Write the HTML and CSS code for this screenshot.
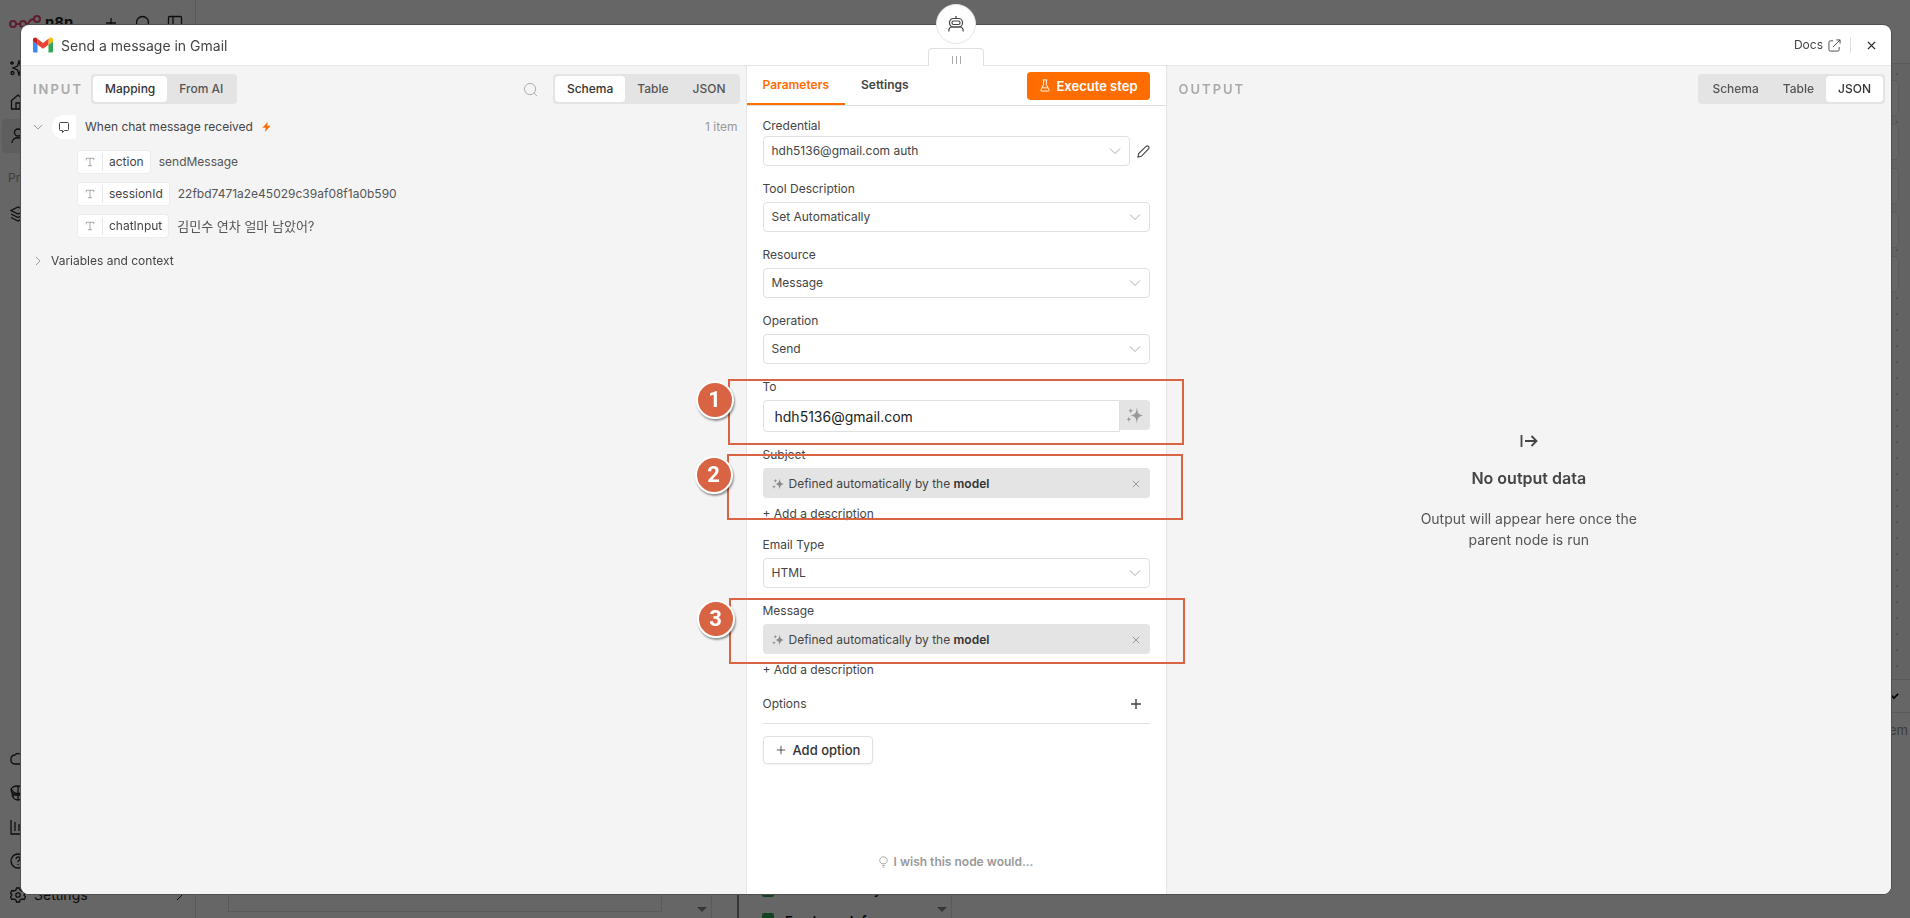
FILE: index.html
```html
<!DOCTYPE html>
<html lang="en">
<head>
  <meta charset="UTF-8"/>
  <meta name="viewport" content="width=device-width, initial-scale=1.0"/>
  <title>Send a message in Gmail - n8n</title>
  <link rel="stylesheet" href="styles.css">
</head>
<body>
  <!-- shared icons -->
  <svg class="sprite" aria-hidden="true">
    <symbol id="chevron-down" viewBox="0 0 12 12"><path d="M1 3.5l5 5 5-5"/></symbol>
    <symbol id="plus" viewBox="0 0 12 12"><path d="M6 1v10M1 6h10"/></symbol>
    <symbol id="close" viewBox="0 0 10 10"><path d="M1 1l8 8M9 1L1 9"/></symbol>
    <symbol id="search" viewBox="0 0 16 16"><circle cx="7.5" cy="7.5" r="6"/><path d="M12 12l3 3"/></symbol>
    <symbol id="text-type" viewBox="0 0 12 12"><path d="M1.500 4V1.500h9V4M6 1.500v9M3.500 10.500h5"/></symbol>
    <symbol id="sparkles" viewBox="0 0 18 18"><path d="M11.500 0c.5 6 1.500 8 6.500 9-5 1-6 3-6.500 9-.5-6-1.500-8-6.500-9 5-1 6-3 6.500-9zM5 1c.3 2 .9 2.700 3 3-2.100.3-2.700 1-3 3-.3-2-.9-2.700-3-3 2.100-.3 2.700-1 3-3zM3 10c.3 2.200.9 2.700 3 3-2.100.3-2.700 1-3 3.500-.3-2.500-.9-3.200-3-3.500 2.100-.3 2.700-.8 3-3z"/></symbol>
  </svg>

  <div class="app">
    <aside class="sidebar">
      <div class="brand">
        <svg class="logo" viewBox="0 0 32 16"><circle cx="4" cy="9" r="3"/><circle cx="14" cy="9" r="3"/><circle cx="28" cy="4" r="3"/><circle cx="27" cy="14" r="3"/><path d="M7 9h4M17 9h1c3 0 1-5 7-5M18 9c3 0 2 5 6 5"/></svg>
        <strong>n8n</strong>
        <svg class="icon first"><use href="#plus"/></svg>
        <svg class="icon"><use href="#search"/></svg>
        <svg class="icon" viewBox="0 0 16 16"><rect x="1.500" y="1.500" width="13" height="13" rx="1"/><path d="M6 1.500v13"/></svg>
      </div>
      <nav class="menu">
        <a href="#"><svg class="icon" viewBox="0 0 16 16"><path d="M9 1l1.500 5L15 8l-4.500 2L9 15l-1.500-5L3 8l4.500-2zM2 1v4M0 3h4"/><circle cx="2.500" cy="13" r="1.500"/></svg></a>
        <a href="#"><svg class="icon" viewBox="0 0 16 16"><path d="M1.500 6.500L8 1l6.500 5.500V15h-13zM6 15V9h4v6"/></svg></a>
        <a href="#" class="current"><svg class="icon" viewBox="0 0 16 16"><circle cx="8" cy="4.500" r="3.500"/><path d="M2 15c0-7 12-7 12 0"/></svg></a>
      </nav>
      <p class="menu-label">Projects</p>
      <nav class="menu">
        <a href="#"><svg class="icon" viewBox="0 0 16 16"><path d="M8 1l7 3.500L8 8 1 4.500zM1 8l7 3.500L15 8M1 11.500L8 15l7-3.500"/></svg></a>
      </nav>
      <nav class="menu bottom">
        <a href="#"><svg class="icon" viewBox="0 0 16 16"><path d="M5 13C-1 13 0 4 5 4c2-3 7-1 7 2 5 0 4 7 0 7z"/></svg></a>
        <a href="#"><svg class="icon" viewBox="0 0 16 16"><ellipse cx="7" cy="5" rx="6" ry="4"/><path d="M2 7c0 5 2 8 6 8s6-3 6-8M2 10h12M8 1v14M1 4c4 6 10 6 14 0"/></svg></a>
        <a href="#"><svg class="icon" viewBox="0 0 16 16"><path d="M1 1v14h14M5 3v9M9 5v7M13 8v4"/></svg></a>
        <a href="#"><svg class="icon" viewBox="0 0 16 16"><circle cx="8" cy="8" r="7"/><path d="M6 6c0-3 4.500-2.500 4 0-.3 1-2 1.300-2 3M8 11v1"/></svg></a>
        <a href="#"><svg class="icon" viewBox="0 0 16 16"><path d="M6.500 1h3l.6 2 1.900 1 2.100-.5 1.400 2.500L14 8l1.500 2-1.400 2.500L12 12l-1.900 1-.6 2h-3l-.6-2L4 12l-2.100.5L.5 10 2 8 .5 6l1.400-2.500L4 4l1.900-1z"/><circle cx="8" cy="8" r="2.200"/></svg>Settings
          <svg class="arrow" viewBox="0 0 12 12"><path d="M4 1l5 5-5 5"/></svg></a>
      </nav>
    </aside>

    <div class="workspace">
      <div class="topbar"></div>
      <div class="canvas">
        <div class="tool"></div>
        <div class="tool"></div>
        <div class="tool"></div>
        <div class="tool"></div>
        <div class="tool"></div>
      </div>
      <div class="logs">
        <div class="logs-head"><svg><use href="#chevron-down"/></svg></div>
        <div class="logs-body">
          <div class="chat-pane"><div class="chat-box"></div><span class="caret"></span></div>
          <div class="run-pane">
            <ul>
              <li><i class="sheet"></i>Vacation Policy</li>
              <li><i class="sheet"></i>Employee Info</li>
            </ul>
            <span class="caret"></span>
          </div>
          <div class="data-pane">1 item</div>
        </div>
      </div>
    </div>
  </div>

  <div class="overlay"></div>

  <div class="modal" role="dialog" aria-labelledby="title">
    <div class="parent-node">
      <svg viewBox="0 0 16 16"><path d="M8 0v3M.8 15.500c0-3.500 1.700-4.500 3.200-4.500h8c1.500 0 3.200 1 3.200 4.500"/><rect x="1.500" y="2.500" width="13" height="8.500" rx="4"/><rect x="4" y="5" width="8" height="3.500" rx="1.500"/></svg>
    </div>
    <header class="modal-head">
      <svg class="gmail" viewBox="52 42 88 66">
        <path fill="#4285f4" d="M58 108h14V74L52 59v43c0 3.320 2.690 6 6 6"/>
        <path fill="#34a853" d="M120 108h14c3.320 0 6-2.690 6-6V59l-20 15"/>
        <path fill="#fbbc04" d="M120 48v26l20-15v-8c0-7.420-8.470-11.650-14.400-7.200"/>
        <path fill="#ea4335" d="M72 74V48l24 18 24-18v26L96 92"/>
        <path fill="#c5221f" d="M52 51v8l20 15V48l-5.600-4.200c-5.940-4.450-14.400-.22-14.400 7.200"/>
      </svg>
      <h1 id="title">Send a message in Gmail</h1>
      <a class="docs" href="#">Docs
        <svg viewBox="0 0 14 14"><path d="M5.500 2H2.500A1.500 1.500 0 0 0 1 3.500v8A1.500 1.500 0 0 0 2.500 13h8a1.500 1.500 0 0 0 1.500-1.500v-3M5.500 8.500L13 1M9 1h4v4"/></svg>
      </a>
      <button class="close" aria-label="Close"><svg><use href="#close"/></svg></button>
    </header>

    <div class="panels">
      <section class="panel">
        <div class="panel-head">
          <h2>Input</h2>
          <div class="segmented">
            <button class="active">Mapping</button>
            <button>From AI</button>
          </div>
          <button class="search" aria-label="Search"><svg><use href="#search"/></svg></button>
          <div class="segmented">
            <button class="active">Schema</button>
            <button>Table</button>
            <button>JSON</button>
          </div>
        </div>
        <div class="schema">
          <div class="schema-node">
            <svg class="toggle"><use href="#chevron-down"/></svg>
            <span class="node-icon"><svg viewBox="0 0 12 12"><path d="M2.500 1.500h7a1 1 0 0 1 1 1v6a1 1 0 0 1-1 1H6.500L4.500 11.500V9.500h-2a1 1 0 0 1-1-1v-6a1 1 0 0 1 1-1z"/></svg></span>
            <span>When chat message received</span>
            <svg class="bolt" viewBox="0 0 10 12"><path d="M6.500 0L0 7h4L3 12l7-7.500H5.800z"/></svg>
            <span class="count">1 item</span>
          </div>
          <ul class="fields">
            <li><span class="pill"><svg><use href="#text-type"/></svg><b>action</b></span><span>sendMessage</span></li>
            <li><span class="pill"><svg><use href="#text-type"/></svg><b>sessionId</b></span><span>22fbd7471a2e45029c39af08f1a0b590</span></li>
            <li><span class="pill"><svg><use href="#text-type"/></svg><b>chatInput</b></span><span lang="ko">김민수 연차 얼마 남았어?</span></li>
          </ul>
          <div class="schema-vars">
            <svg class="toggle closed"><use href="#chevron-down"/></svg>
            <span>Variables and context</span>
          </div>
        </div>
      </section>

      <section class="params">
        <div class="drag"><span></span><span></span><span></span></div>
        <div class="tabs">
          <button class="tab active">Parameters</button>
          <button class="tab">Settings</button>
          <button class="execute">
            <svg viewBox="0 0 12 14"><path d="M3.500 1h5M4.500 1v5L1.500 12c-.2.600 0 1 .7 1h7.600c.7 0 .9-.4.700-1L7.500 6V1M3 9.500h6"/></svg>
            Execute step
          </button>
        </div>
        <form class="form">
          <div class="field credential">
            <label for="credential">Credential</label>
            <div class="row">
              <div class="select">
                <select id="credential"><option>hdh5136@gmail.com auth</option></select>
                <svg><use href="#chevron-down"/></svg>
              </div>
              <button type="button" class="edit" aria-label="Edit credential">
                <svg viewBox="0 0 14 14"><path d="M1 13l.8-3.800L10 1.300c1.700-1 3.600.8 2.600 2.600L4.700 12.200z"/></svg>
              </button>
            </div>
          </div>
          <div class="field">
            <label for="description">Tool Description</label>
            <div class="select">
              <select id="description"><option>Set Automatically</option></select>
              <svg><use href="#chevron-down"/></svg>
            </div>
          </div>
          <div class="field">
            <label for="resource">Resource</label>
            <div class="select">
              <select id="resource"><option>Message</option></select>
              <svg><use href="#chevron-down"/></svg>
            </div>
          </div>
          <div class="field">
            <label for="operation">Operation</label>
            <div class="select">
              <select id="operation"><option>Send</option></select>
              <svg><use href="#chevron-down"/></svg>
            </div>
          </div>
          <div class="field">
            <label for="to">To</label>
            <div class="to-row">
              <input type="text" id="to" value="hdh5136@gmail.com">
              <button type="button" class="ai" aria-label="Let the model define this"><svg><use href="#sparkles"/></svg></button>
            </div>
          </div>
          <div class="field">
            <span class="label">Subject</span>
            <div class="auto">
              <svg class="spark"><use href="#sparkles"/></svg>
              <span>Defined automatically by the <b>model</b></span>
              <button type="button" aria-label="Clear subject"><svg><use href="#close"/></svg></button>
            </div>
            <a class="add-desc" href="#">+ Add a description</a>
          </div>
          <div class="field">
            <label for="emailType">Email Type</label>
            <div class="select">
              <select id="emailType"><option>HTML</option></select>
              <svg><use href="#chevron-down"/></svg>
            </div>
          </div>
          <div class="field">
            <span class="label">Message</span>
            <div class="auto">
              <svg class="spark"><use href="#sparkles"/></svg>
              <span>Defined automatically by the <b>model</b></span>
              <button type="button" aria-label="Clear message"><svg><use href="#close"/></svg></button>
            </div>
            <a class="add-desc" href="#">+ Add a description</a>
          </div>
          <div class="options">
            <span>Options</span>
            <button type="button" aria-label="Add"><svg><use href="#plus"/></svg></button>
          </div>
          <button type="button" class="add-option"><svg><use href="#plus"/></svg>Add option</button>
        </form>
        <a class="wish" href="#">
          <svg viewBox="0 0 10 14"><path d="M3 9C-1.500 6 1 1 5 1s6.500 5 2 8M3 9h4M3.500 11h3M4 13h2"/></svg>
          I wish this node would...
        </a>

        <div class="callout one"><span>1</span></div>
        <div class="callout two"><span>2</span></div>
        <div class="callout three"><span>3</span></div>
      </section>

      <section class="panel">
        <div class="panel-head">
          <h2>Output</h2>
          <div class="segmented end">
            <button>Schema</button>
            <button>Table</button>
            <button class="active">JSON</button>
          </div>
        </div>
        <div class="empty">
          <svg viewBox="0 0 18 14"><path d="M1.500 1v12M5 7h11.500M11.500 2l5 5-5 5"/></svg>
          <h3>No output data</h3>
          <p>Output will appear here once the parent node is run</p>
        </div>
      </section>
    </div>
  </div>
</body>
</html>
```
FILE: styles.css
```css
* {
  box-sizing: border-box;
}

body {
  margin: 0;
  overflow: hidden;
  font-family: Inter, "Noto Sans CJK KR", sans-serif;
  font-size: 12px;
  line-height: 18px;
  color: #444;
}

h1, h2, h3, p, ul {
  margin: 0;
  padding: 0;
}

ul {
  list-style: none;
}

a {
  color: inherit;
  text-decoration: none;
}

button, input, select {
  font: inherit;
  color: inherit;
  margin: 0;
}

button {
  display: flex;
  align-items: center;
  justify-content: center;
  padding: 0;
  border: none;
  background: none;
  cursor: pointer;
}

svg {
  display: block;
  flex: none;
  width: 12px;
  height: 12px;
  fill: none;
  stroke: currentColor;
}

.sprite {
  position: absolute;
  width: 0;
  height: 0;
}

/* editor behind the dialog */
.app {
  display: flex;
  height: 100vh;
  background: #fff;
}

.sidebar {
  display: flex;
  flex-direction: column;
  width: 196px;
  padding-bottom: 6px;
  border-right: 1px solid #e0e0e0;
  font-size: 14px;
}

.icon {
  width: 16px;
  height: 16px;
  stroke-width: 1.3;
}

.brand {
  display: flex;
  align-items: center;
  gap: 16px;
  height: 51px;
  padding: 0 12px 6px 9px;
  color: #222;
}

.brand strong {
  margin-left: -12px;
  font-size: 15px;
  line-height: 20px;
}

.brand .first {
  width: 12px;
  height: 12px;
  margin: 0 2px 0 auto;
}

.logo {
  width: 32px;
  height: 16px;
  stroke: #ea4b71;
  stroke-width: 2;
}

.menu a {
  display: flex;
  align-items: center;
  gap: 8px;
  height: 34px;
  margin: 0 2px;
  padding: 0 8px;
  border-radius: 4px;
  color: #222;
}

.menu .current {
  background: #ebebeb;
}

.menu .arrow {
  margin-left: auto;
}

.menu-label {
  padding: 16px 8px 10px;
  font-size: 12px;
  color: #999;
}

.bottom {
  margin-top: auto;
}

.workspace {
  flex: 1;
  display: flex;
  flex-direction: column;
}

.topbar {
  height: 64px;
  border-bottom: 1px solid #e0e0e0;
}

.canvas {
  flex: 1;
  display: flex;
  flex-direction: column;
  align-items: flex-end;
  gap: 8px;
  padding: 16px 11px;
  background: #f8f8f8 radial-gradient(#ccc 1px, transparent 1px) 13px 2px / 16px 16px;
}

.tool {
  width: 36px;
  height: 36px;
  border: 1px solid #e5e5e5;
  border-radius: 4px;
  background: #fff;
}

.logs {
  display: flex;
  flex-direction: column;
  height: 239px;
  border-top: 1px solid #e0e0e0;
}

.logs-head {
  display: flex;
  align-items: center;
  justify-content: flex-end;
  height: 33px;
  padding-right: 11px;
  border-bottom: 1px solid #e0e0e0;
  color: #000;
}

.logs-head svg {
  width: 10px;
  stroke-width: 2;
}

.logs-body {
  flex: 1;
  display: flex;
}

.chat-pane,
.run-pane {
  display: flex;
  align-items: flex-end;
  padding: 0 4px 6px 0;
  border-right: 1px solid #e0e0e0;
}

.chat-pane {
  width: 516px;
  padding-left: 32px;
}

.chat-box {
  flex: 1;
  height: 100px;
  margin-right: 35px;
  border: 1px solid #e0e0e0;
}

.caret {
  border: 5px solid transparent;
  border-top-color: #888;
  border-bottom: none;
}

.run-pane {
  width: 215px;
  margin-left: 25px;
  border-left: 2px solid #888;
}

.run-pane ul {
  flex: 1;
  height: 39px;
  padding-left: 23px;
  font-size: 13px;
  font-weight: 600;
  color: #111;
}

.run-pane li {
  display: flex;
  align-items: center;
  gap: 11px;
  height: 32px;
}

.sheet {
  width: 12px;
  height: 16px;
  border-radius: 2px;
  background: #23a94d;
}

.data-pane {
  flex: 1;
  padding: 8px 2px;
  text-align: right;
  font-size: 13px;
  color: #999;
}

.overlay {
  position: fixed;
  inset: 0;
  background: rgba(0, 0, 0, 0.6);
}

/* dialog */
.modal {
  position: fixed;
  inset: 25px 19px 24px 21px;
  display: flex;
  flex-direction: column;
  border-radius: 8px;
  background: #fff;
  box-shadow: 0 0 0 1px #505050;
}

.parent-node {
  position: absolute;
  top: -21px;
  left: 50%;
  display: flex;
  align-items: center;
  justify-content: center;
  width: 40px;
  height: 40px;
  margin-left: -20px;
  border: 1px solid #e5e5e5;
  border-radius: 50%;
  background: #fff;
}

.parent-node svg {
  width: 16px;
  height: 16px;
  stroke-width: 1.2;
}

.modal-head {
  display: flex;
  align-items: center;
  height: 41px;
  padding: 0 12px;
  border-bottom: 1px solid #e5e5e5;
}

.gmail {
  width: 20px;
  height: 16px;
  stroke: none;
}

.modal-head h1 {
  margin-left: 8px;
  padding-top: 2px;
  font-size: 14px;
  font-weight: 400;
}

.docs {
  display: flex;
  align-items: center;
  gap: 5px;
  height: 16px;
  margin-left: auto;
  padding-right: 9px;
  border-right: 1px solid #e0e0e0;
}

.docs svg {
  width: 13px;
  height: 13px;
}

.close {
  width: 16px;
  height: 16px;
  margin-left: 12px;
  color: #222;
}

.close svg {
  width: 9px;
  height: 9px;
  stroke-width: 1.4;
}

.panels {
  flex: 1;
  display: grid;
  grid-template-columns: 1fr 421px 1fr;
}

.panel {
  display: flex;
  flex-direction: column;
  background: #f4f4f4;
}

.panel:first-child {
  border-bottom-left-radius: 8px;
}

.panel:last-child {
  border-bottom-right-radius: 8px;
}

.panel-head {
  display: flex;
  align-items: center;
  padding: 8px 6px 8px 12px;
}

.panel-head h2 {
  margin-right: 8px;
  font-size: 13px;
  font-weight: 600;
  letter-spacing: 2px;
  text-transform: uppercase;
  color: #aaa;
}

.segmented {
  display: flex;
  padding: 2px;
  border-radius: 4px;
  background: #e4e4e4;
}

.segmented.end {
  margin-left: auto;
}

.segmented button {
  height: 26px;
  padding: 0 12px;
  border-radius: 4px;
  font-weight: 500;
  color: #555;
}

.segmented .active {
  background: #fff;
  color: #333;
}

.search {
  width: 16px;
  margin: 0 14px 0 auto;
  color: #aaa;
}

.search svg {
  width: 15px;
  height: 15px;
}

.schema-node,
.schema-vars {
  display: flex;
  align-items: center;
  height: 24px;
  padding: 0 8px 0 12px;
}

.schema-node {
  margin-top: 3px;
}

.toggle {
  width: 10px;
  height: 10px;
  color: #888;
}

.toggle.closed {
  transform: rotate(-90deg);
}

.node-icon {
  display: flex;
  align-items: center;
  justify-content: center;
  width: 24px;
  height: 24px;
  margin: 0 9px;
  border-radius: 12px 2px 2px 12px;
  background: #fff;
}

.bolt {
  width: 9px;
  height: 10px;
  margin-left: 9px;
  fill: #ff6d00;
  stroke: none;
}

.count {
  margin-left: auto;
  color: #999;
}

.fields {
  display: flex;
  flex-direction: column;
  gap: 10px;
  padding: 12px 0 12px 57px;
}

.fields li {
  display: flex;
  align-items: center;
  gap: 9px;
  height: 22px;
  color: #555;
}

.fields span:lang(ko) {
  font-size: 13px;
}

.pill {
  display: flex;
  align-items: center;
  height: 22px;
  border-radius: 3px;
  background: #fff;
  box-shadow: 0 0 0 1px #ececec;
  color: #444;
}

.pill svg {
  width: 10px;
  height: 10px;
  margin: 0 7px;
  color: #999;
}

.pill b {
  padding: 0 6px;
  border-left: 1px solid #e8e8e8;
  font-weight: 400;
}

.schema-vars {
  gap: 8px;
}

/* parameters */
.params {
  position: relative;
  display: flex;
  flex-direction: column;
  border: solid #e5e5e5;
  border-width: 0 1px;
  background: #fff;
}

.drag {
  position: absolute;
  top: -18px;
  left: 50%;
  display: flex;
  justify-content: center;
  gap: 3px;
  width: 56px;
  height: 18px;
  margin-left: -28px;
  padding-top: 7px;
  border: 1px solid #e0e0e0;
  border-bottom: none;
  border-radius: 4px 4px 0 0;
  background: #fff;
}

.drag span {
  width: 1px;
  height: 8px;
  background: #aaa;
}

.tabs {
  display: flex;
  align-items: center;
  height: 40px;
  padding-right: 16px;
  border-bottom: 1px solid #e0e0e0;
}

.tab {
  height: 39px;
  padding: 0 16px;
  border-bottom: 2px solid transparent;
  font-weight: 600;
}

.tab.active {
  border-color: #ff6d00;
  color: #ff6d00;
}

.execute {
  gap: 5px;
  height: 28px;
  margin-left: auto;
  padding: 0 12px;
  border-radius: 4px;
  background: #ff6d00;
  font-size: 13px;
  font-weight: 600;
  color: #fff;
}

.execute svg {
  height: 13px;
}

.form {
  display: flex;
  flex-direction: column;
  gap: 14px;
  padding: 11px 16px 0;
}

.field {
  display: flex;
  flex-direction: column;
  gap: 4px;
}

.credential {
  gap: 1px;
}

.row,
.to-row {
  display: flex;
  align-items: center;
}

.select {
  flex: 1;
  display: grid;
  align-items: center;
}

.select > * {
  grid-area: 1 / 1;
}

.select select {
  appearance: none;
  width: 100%;
  height: 30px;
  padding: 0 28px 0 8px;
  border: 1px solid #e0e0e0;
  border-radius: 4px;
  background: #fff;
}

.select svg {
  justify-self: end;
  margin-right: 9px;
  color: #aaa;
  pointer-events: none;
}

.edit {
  margin-left: 7px;
}

.edit svg {
  width: 13px;
  height: 13px;
  stroke-width: 1.2;
}

.to-row {
  align-items: flex-start;
}

.to-row input {
  flex: 1;
  min-width: 0;
  height: 32px;
  padding: 0 11px;
  border: 1px solid #e0e0e0;
  border-radius: 4px 0 0 4px;
  font-size: 14px;
  color: #222;
}

.ai {
  width: 30px;
  height: 30px;
  border-radius: 0 4px 4px 0;
  background: #e4e4e4;
  color: #999;
}

.ai svg {
  width: 17px;
  height: 17px;
  fill: currentColor;
  stroke: none;
}

.auto {
  display: flex;
  align-items: center;
  gap: 5px;
  height: 30px;
  padding: 1px 10px 0 9px;
  border-radius: 4px;
  background: #e4e4e4;
}

.auto b {
  font-weight: 600;
  color: #333;
}

.auto .spark {
  fill: #888;
  stroke: none;
}

.auto button {
  margin-left: auto;
  color: #888;
}

.auto button svg {
  width: 8px;
  height: 8px;
}

.add-desc {
  align-self: flex-start;
  margin-top: 3px;
  line-height: 17px;
}

.options {
  display: flex;
  align-items: center;
  justify-content: space-between;
  height: 31px;
  margin-top: 1px;
  padding: 0 8px 8px 0;
  border-bottom: 1px solid #e0e0e0;
}

.options svg {
  stroke-width: 1.4;
}

.add-option {
  align-self: flex-start;
  gap: 7px;
  height: 28px;
  margin-top: -2px;
  padding: 0 12px;
  border: 1px solid #e0e0e0;
  border-radius: 4px;
  box-shadow: 0 1px 2px rgba(0, 0, 0, 0.06);
  font-size: 13px;
  font-weight: 500;
  color: #333;
}

.add-option svg {
  width: 10px;
  height: 10px;
}

.wish {
  display: flex;
  align-items: center;
  justify-content: center;
  gap: 6px;
  margin-top: auto;
  padding-bottom: 23px;
  font-weight: 600;
  color: #999;
}

.wish svg {
  width: 9px;
}

/* numbered callouts drawn over the form */
.callout {
  position: absolute;
  width: 456px;
  height: 66px;
  border: 2px solid #d96444;
  pointer-events: none;
}

.one {
  top: 313px;
  left: -19px;
}

.two {
  top: 388px;
  left: -20px;
}

.three {
  top: 532px;
  left: -18px;
}

.callout span {
  position: absolute;
  top: 0;
  left: -34px;
  width: 38px;
  height: 38px;
  border: 2px solid #fff;
  border-radius: 50%;
  background: #d96444;
  box-shadow: 1px 2px 2px rgba(0, 0, 0, 0.4);
  font: bold 22px/34px Roboto, sans-serif;
  text-align: center;
  color: #fff;
}

.empty {
  flex: 1;
  display: flex;
  flex-direction: column;
  align-items: center;
  justify-content: center;
  padding-bottom: 22px;
  text-align: center;
}

.empty svg {
  width: 18px;
  height: 14px;
  stroke-width: 1.8;
}

.empty h3 {
  margin: 20px 0;
  font-size: 16px;
  font-weight: 600;
  line-height: 20px;
}

.empty p {
  width: 240px;
  font-size: 14px;
  line-height: 21px;
  color: #555;
}
```
